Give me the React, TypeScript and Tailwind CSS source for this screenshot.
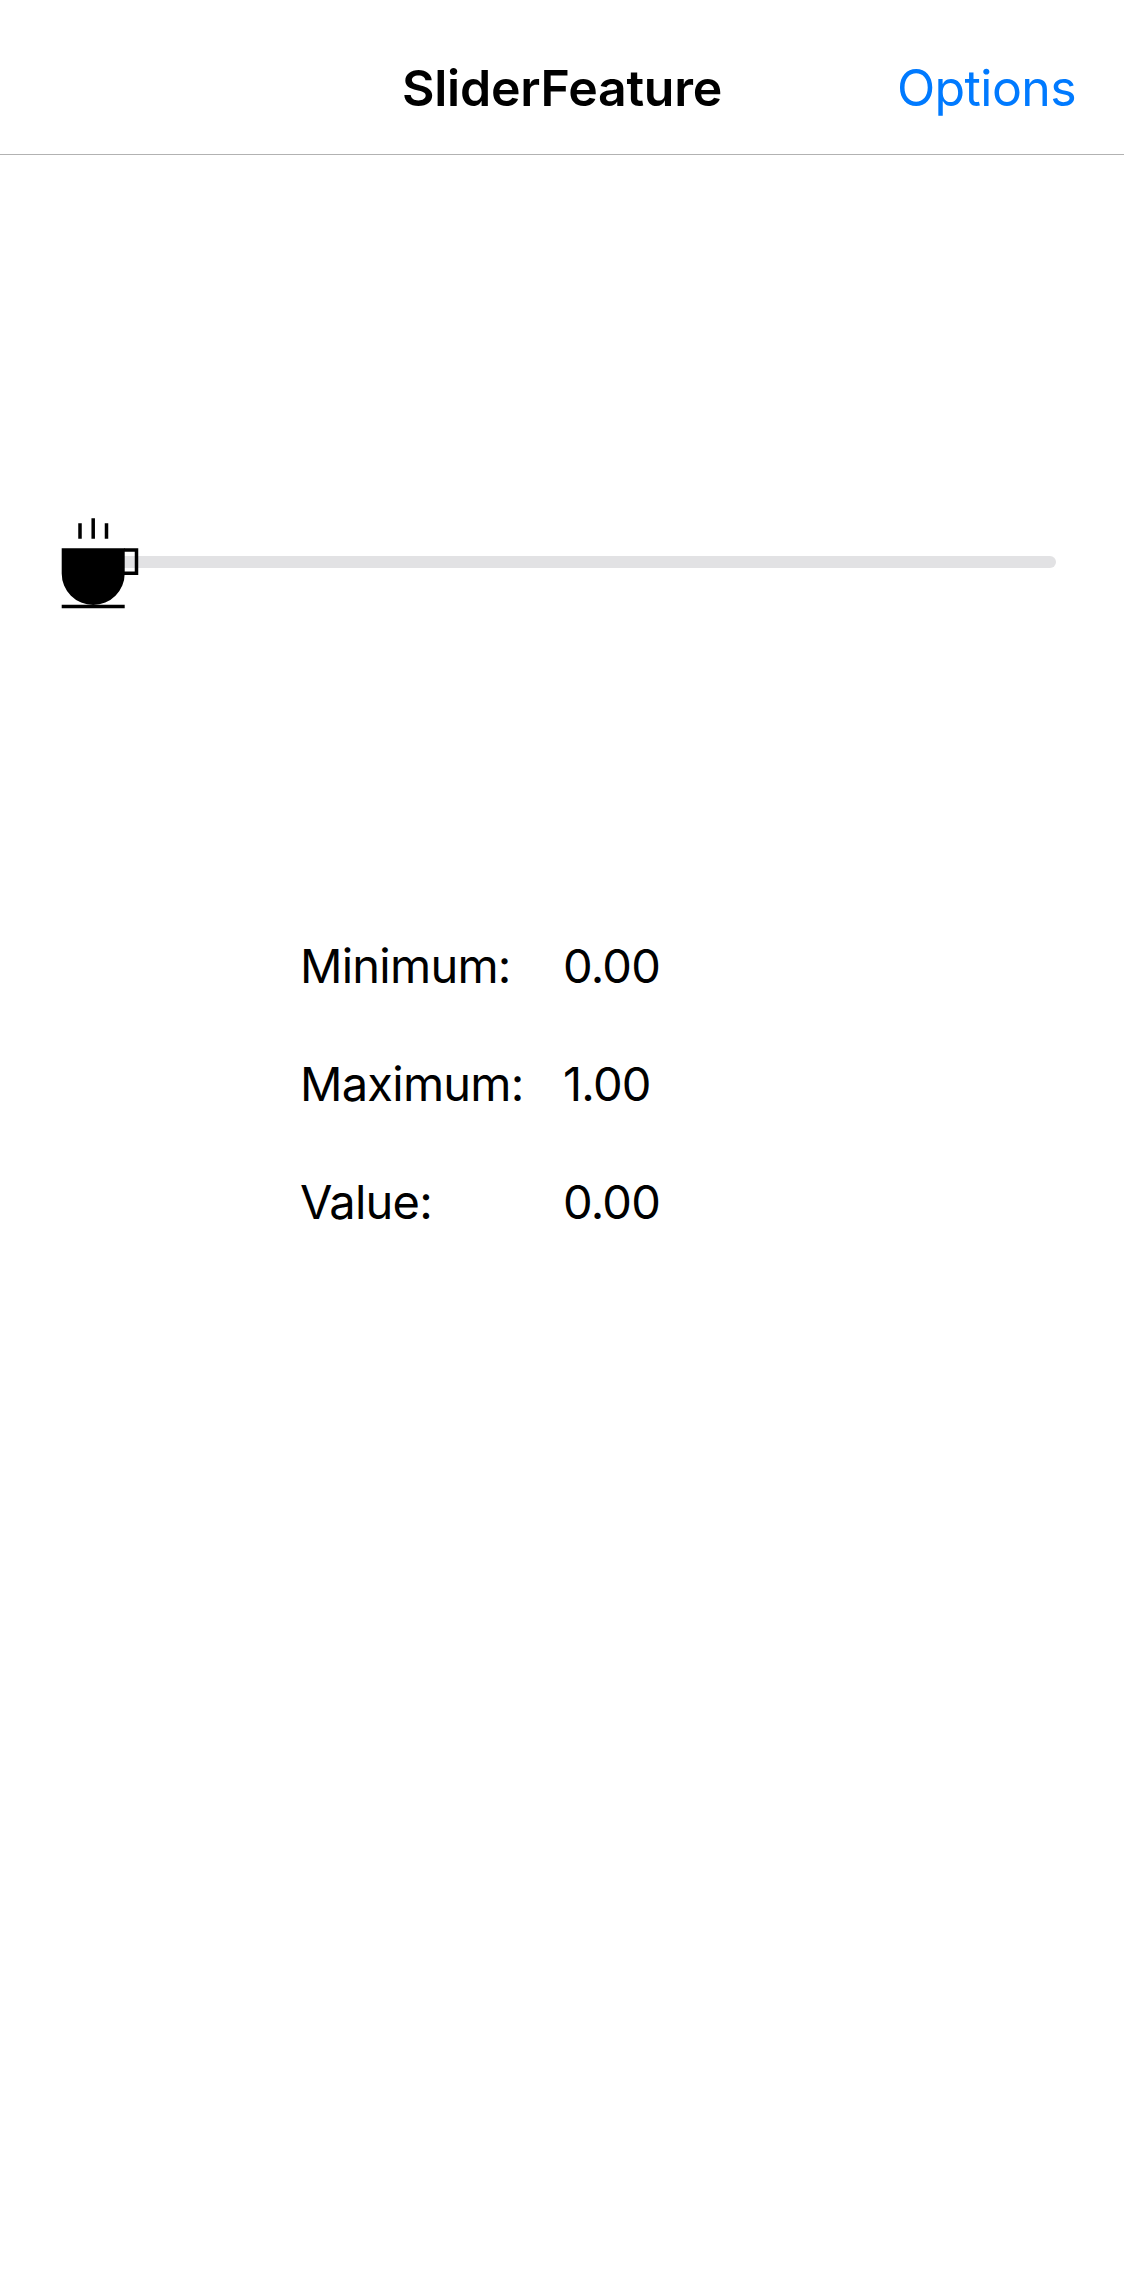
const rows = [
  { label: "Minimum:", value: "0.00" },
  { label: "Maximum:", value: "1.00" },
  { label: "Value:", value: "0.00" },
];

export default function App() {
  return (
    <div className="flex h-[2286px] w-[1124px] flex-col bg-white font-['Inter',sans-serif] text-black">
      <header className="grid h-[155px] grid-cols-[1fr_auto_1fr] items-center border-b border-[#b2b2b2] px-[48px] pt-[21px]">
        <span />
        <h1 className="text-[50px] leading-[60px] font-semibold tracking-[-0.25px]">SliderFeature</h1>
        <button className="justify-self-end text-[50px] leading-[60px] tracking-[-0.6px] text-[#007aff]">Options</button>
      </header>
      <main>
        <div className="relative mx-[68px] mt-[401px] h-3 rounded-full bg-[#e2e2e4]">
          <svg className="absolute -top-[41px] -left-[8px]" width="80" height="96" viewBox="60 515 80 96" fill="none" stroke="#000" strokeWidth="3.5">
            <path d="M80 523.300v15.400M93.200 518.300v20.400M106.500 523.300v15.400M61.700 606.600h63" />
            <path d="M124 550h12.500v23.300h-12.500" />
            <path d="M61.700 548.300h63v25.200a31.500 31.500 0 0 1-63 0z" fill="#000" stroke="none" />
          </svg>
        </div>
        <dl className="mt-[368px] ml-[300px] grid w-fit grid-cols-[263px_auto] gap-y-[58px] text-[47px] leading-[60px] tracking-[-0.75px]">
          {rows.map((r) => (
            <div key={r.label} className="contents">
              <dt>{r.label}</dt>
              <dd>{r.value}</dd>
            </div>
          ))}
        </dl>
      </main>
    </div>
  );
}
